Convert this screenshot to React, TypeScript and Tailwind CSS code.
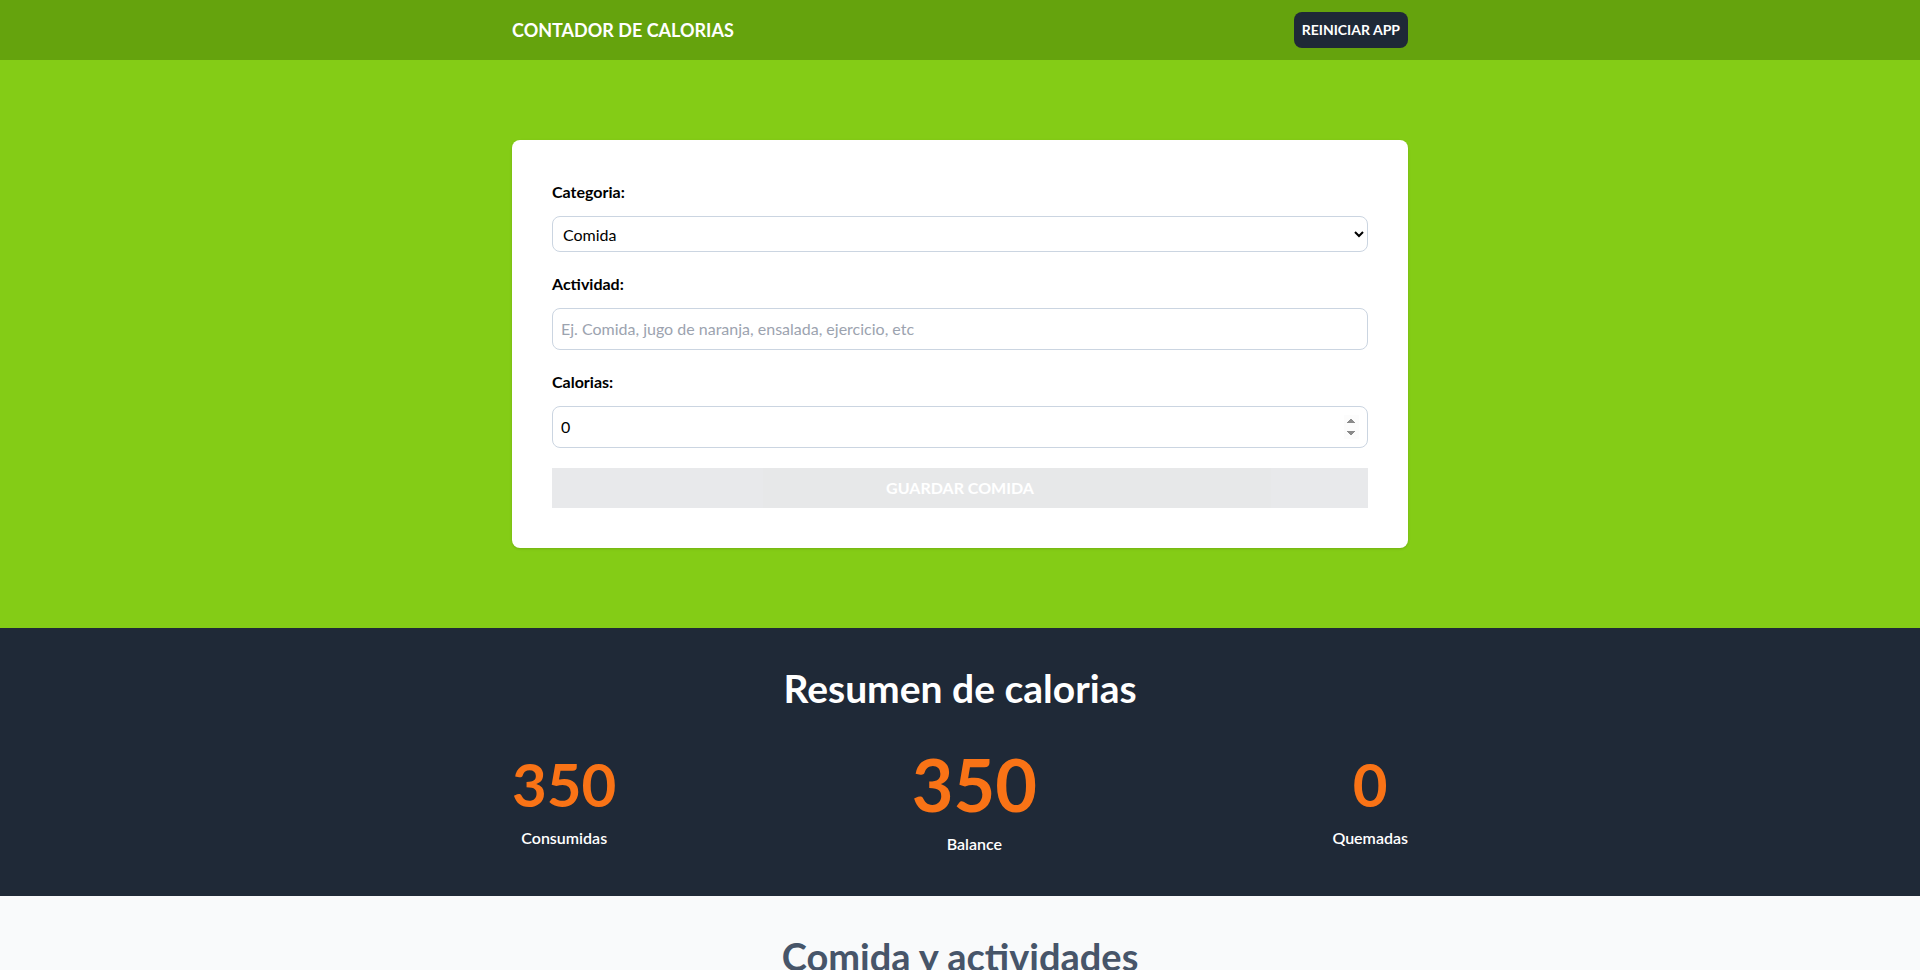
import { useMemo, useState } from "react";

type Category = { id: number; name: string };

type Activity = {
  id: string;
  category: number;
  name: string;
  calories: number;
};

const CATEGORIES: Category[] = [
  { id: 1, name: "Comida" },
  { id: 2, name: "Ejercicio" },
];

const INITIAL_ACTIVITIES: Activity[] = [
  { id: "a1", category: 1, name: "Desayuno", calories: 350 },
];

function CalorieDisplay({
  calories,
  text,
  big,
}: {
  calories: number;
  text: string;
  big?: boolean;
}) {
  return (
    <div className="flex flex-col items-center gap-3">
      <span
        className={`font-bold text-[#f97316] ${
          big ? "text-7xl leading-[72px]" : "text-6xl leading-[60px]"
        }`}
      >
        {calories}
      </span>
      <span className="text-base leading-6 font-semibold text-white">
        {text}
      </span>
    </div>
  );
}

export default function App() {
  const [activities, setActivities] = useState<Activity[]>(INITIAL_ACTIVITIES);
  const [category, setCategory] = useState(1);
  const [name, setName] = useState("");
  const [calories, setCalories] = useState(0);

  const consumed = useMemo(
    () =>
      activities
        .filter((a) => a.category === 1)
        .reduce((t, a) => t + a.calories, 0),
    [activities]
  );
  const burned = useMemo(
    () =>
      activities
        .filter((a) => a.category === 2)
        .reduce((t, a) => t + a.calories, 0),
    [activities]
  );

  const isValid = name.trim() !== "" && calories > 0;
  const categoryName = CATEGORIES.find((c) => c.id === category)?.name ?? "";

  function handleSubmit(e: React.FormEvent) {
    e.preventDefault();
    if (!isValid) return;
    setActivities([
      ...activities,
      { id: String(Date.now()), category, name, calories },
    ]);
    setName("");
    setCalories(0);
  }

  return (
    <div className="min-h-screen bg-[#f9fafb] font-['Lato',_'Liberation_Sans',_sans-serif]">
      <header className="bg-[#65a30d] py-3">
        <div className="max-w-4xl mx-auto flex justify-between items-center">
          <h1 className="text-lg leading-7 font-bold text-white uppercase">
            Contador de calorias
          </h1>
          <button
            type="button"
            onClick={() => setActivities([])}
            className="bg-[#1f2937] hover:bg-[#111827] p-2 text-sm leading-5 font-bold uppercase text-white rounded-lg cursor-pointer"
          >
            Reiniciar App
          </button>
        </div>
      </header>

      <section className="bg-[#84cc16] py-20 px-5">
        <div className="max-w-4xl mx-auto">
          <form
            onSubmit={handleSubmit}
            className="space-y-5 bg-white shadow p-10 rounded-lg"
          >
            <div className="grid grid-cols-1 gap-3">
              <label htmlFor="category" className="font-bold leading-6">
                Categoria:
              </label>
              <select
                id="category"
                value={category}
                onChange={(e) => setCategory(+e.target.value)}
                className="border border-[#cbd5e1] rounded-lg pl-1.5 pr-2 h-9 w-full bg-white"
              >
                {CATEGORIES.map((c) => (
                  <option key={c.id} value={c.id}>
                    {c.name}
                  </option>
                ))}
              </select>
            </div>

            <div className="grid grid-cols-1 gap-3">
              <label htmlFor="name" className="font-bold leading-6">
                Actividad:
              </label>
              <input
                id="name"
                type="text"
                value={name}
                onChange={(e) => setName(e.target.value)}
                placeholder="Ej. Comida, jugo de naranja, ensalada, ejercicio, etc"
                className="border border-[#cbd5e1] p-2 rounded-lg leading-6 placeholder:text-[#9ca3af]"
              />
            </div>

            <div className="grid grid-cols-1 gap-3">
              <label htmlFor="calories" className="font-bold leading-6">
                Calorias:
              </label>
              <input
                id="calories"
                type="number"
                value={calories}
                onChange={(e) => setCalories(+e.target.value)}
                className="border border-[#cbd5e1] p-2 rounded-lg leading-6 [&::-webkit-inner-spin-button]:opacity-100"
              />
            </div>

            <input
              type="submit"
              disabled={!isValid}
              value={`Guardar ${categoryName}`}
              className="bg-[#1f2937] hover:bg-[#111827] w-full p-2 leading-6 font-bold uppercase text-white cursor-pointer disabled:opacity-10 disabled:cursor-default"
            />
          </form>
        </div>
      </section>

      <section className="bg-[#1f2937] py-10">
        <div className="max-w-4xl mx-auto">
          <h2 className="text-[39px] leading-10 font-bold text-white text-center">
            Resumen de calorias
          </h2>
          <div className="flex justify-between items-center mt-10">
            <CalorieDisplay calories={consumed} text="Consumidas" />
            <CalorieDisplay calories={consumed - burned} text="Balance" big />
            <CalorieDisplay calories={burned} text="Quemadas" />
          </div>
        </div>
      </section>

      <section className="p-10 mx-auto max-w-4xl">
        <h2 className="text-[38px] leading-10 font-bold text-[#475569] text-center">
          Comida y actividades
        </h2>
      </section>
    </div>
  );
}
